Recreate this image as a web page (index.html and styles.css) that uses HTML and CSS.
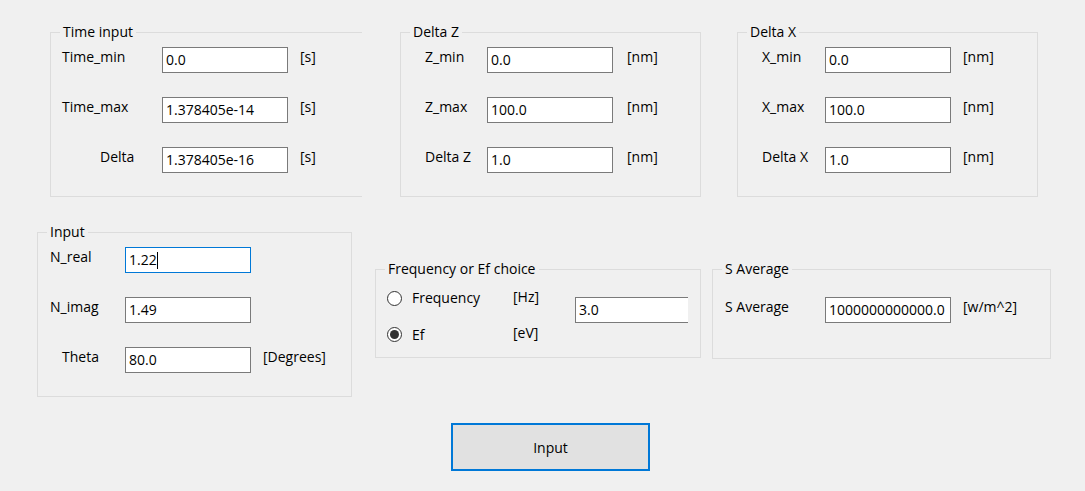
FILE: index.html
```html
<!DOCTYPE html>
<html lang="en">
<head>
<meta charset="utf-8">
<title>Input</title>
<link rel="stylesheet" href="styles.css">
</head>
<body>
<div class="form">
  <div class="row row-top">
    <fieldset class="group g-time">
      <legend>Time input</legend>
      <div class="fields">
        <span class="lbl">Time_min</span><div class="tb">0.0</div><span class="unit">[s]</span>
        <span class="lbl">Time_max</span><div class="tb">1.378405e-14</div><span class="unit">[s]</span>
        <span class="lbl ind-delta">Delta</span><div class="tb">1.378405e-16</div><span class="unit">[s]</span>
      </div>
    </fieldset>
    <fieldset class="group g-z">
      <legend>Delta Z</legend>
      <div class="fields">
        <span class="lbl">Z_min</span><div class="tb">0.0</div><span class="unit">[nm]</span>
        <span class="lbl">Z_max</span><div class="tb">100.0</div><span class="unit">[nm]</span>
        <span class="lbl">Delta Z</span><div class="tb">1.0</div><span class="unit">[nm]</span>
      </div>
    </fieldset>
    <fieldset class="group g-x">
      <legend>Delta X</legend>
      <div class="fields">
        <span class="lbl">X_min</span><div class="tb">0.0</div><span class="unit">[nm]</span>
        <span class="lbl">X_max</span><div class="tb">100.0</div><span class="unit">[nm]</span>
        <span class="lbl">Delta X</span><div class="tb">1.0</div><span class="unit">[nm]</span>
      </div>
    </fieldset>
  </div>

  <div class="row row-mid">
    <fieldset class="group g-input">
      <legend>Input</legend>
      <div class="fields">
        <span class="lbl">N_real</span><div class="tb focused">1.22<span class="caret"></span></div><span class="unit"></span>
        <span class="lbl">N_imag</span><div class="tb">1.49</div><span class="unit"></span>
        <span class="lbl ind-theta">Theta</span><div class="tb">80.0</div><span class="unit">[Degrees]</span>
      </div>
    </fieldset>
    <fieldset class="group g-freq">
      <legend>Frequency or Ef choice</legend>
      <div class="freq-body">
        <div class="radios">
          <span class="radio"></span><span class="rlbl">Frequency</span><span class="runit">[Hz]</span>
          <span class="radio checked"></span><span class="rlbl ef">Ef</span><span class="runit">[eV]</span>
        </div>
        <div class="tb tb-freq">3.0</div>
      </div>
    </fieldset>
    <fieldset class="group g-savg">
      <legend>S Average</legend>
      <div class="fields">
        <span class="lbl">S Average</span><div class="tb">1000000000000.0</div><span class="unit">[w/m^2]</span>
      </div>
    </fieldset>
  </div>

  <div class="row row-btn">
    <button class="btn" type="button">Input</button>
  </div>
</div>
</body>
</html>
```

FILE: styles.css
```css
* { box-sizing: border-box; }

html, body {
  margin: 0;
  padding: 0;
  background: #f0f0f0;
}

body {
  width: 1085px;
  height: 491px;
  overflow: hidden;
  font-family: "Open Sans", "Noto Sans", sans-serif;
  font-size: 14px;
  line-height: 18px;
  color: #000;
}

.row {
  display: flex;
  align-items: flex-start;
}

.row-top { padding-top: 23px; }
.row-mid { margin-top: 26px; }
.row-btn { margin-top: 26px; }

.group {
  margin: 0;
  padding: 0;
  min-inline-size: 0;
  border: 1px solid #dcdcdc;
}

.group legend {
  margin-left: 9px;
  padding: 0 3px;
  line-height: 18px;
  font-size: 14px;
}

.g-time { margin-left: 50px; width: 312px; height: 174px; border-right: none; }
.g-z    { margin-left: 38px; width: 301px; height: 174px; }
.g-x    { margin-left: 36px; width: 301px; height: 174px; }

.g-input { margin-left: 37px; width: 315px; height: 174px; }
.g-freq  { margin-left: 23px; margin-top: 37px; width: 326px; height: 98px; }
.g-savg  { margin-left: 11px; margin-top: 37px; width: 339px; height: 99px; }

.fields {
  display: grid;
  grid-template-columns: 100px 126px auto;
  row-gap: 24px;
  align-items: start;
  padding-top: 6px;
}

.g-time .fields  { padding-left: 11px; grid-template-columns: 100px 126px auto; }
.g-z .fields     { padding-left: 24px; grid-template-columns: 62px 126px auto; }
.g-x .fields     { padding-left: 24px; grid-template-columns: 63px 126px auto; }
.g-input .fields { padding-left: 12px; grid-template-columns: 75px 126px auto; }
.g-savg .fields  { padding-left: 12px; padding-top: 19px; grid-template-columns: 100px 126px auto; }

.lbl {
  padding-top: 1px;
  white-space: nowrap;
}

.ind-delta { padding-left: 38px; }
.ind-theta { padding-left: 12px; }

.unit {
  padding-top: 1px;
  padding-left: 12px;
  white-space: nowrap;
}

.g-z .unit { padding-left: 14px; }

.tb {
  height: 26px;
  border: 1px solid #7a7a7a;
  background: #fff;
  padding: 0 3px;
  line-height: 24px;
  white-space: nowrap;
  overflow: hidden;
}

.tb.focused { border-color: #0078d7; }

.caret {
  display: inline-block;
  width: 1px;
  height: 17px;
  background: #000;
  vertical-align: -4px;
  margin-left: 0;
}

.freq-body {
  display: flex;
  align-items: flex-start;
  padding: 11px 0 0 11px;
}

.radios {
  display: grid;
  grid-template-columns: 25px 101px 62px;
  grid-auto-rows: 18px;
  row-gap: 18px;
  align-items: center;
}

.radio {
  display: block;
  width: 15px;
  height: 15px;
  border: 1px solid #333;
  border-radius: 50%;
  background: #fff;
}

.radio.checked::after {
  content: "";
  display: block;
  width: 9px;
  height: 9px;
  margin: 2px;
  border-radius: 50%;
  background: #333;
}

.rlbl, .runit { white-space: nowrap; }
.rlbl.ef { position: relative; top: 1px; }
.runit { position: relative; top: -1px; }

.tb-freq {
  margin-top: 8px;
  width: 113px;
  border-right: none;
}

.btn {
  margin-left: 451px;
  width: 199px;
  height: 48px;
  border: 2px solid #0078d7;
  background: #e1e1e1;
  font-family: "Open Sans", "Noto Sans", sans-serif;
  font-size: 14px;
  color: #000;
  padding: 0;
  display: flex;
  align-items: center;
  justify-content: center;
}
```
